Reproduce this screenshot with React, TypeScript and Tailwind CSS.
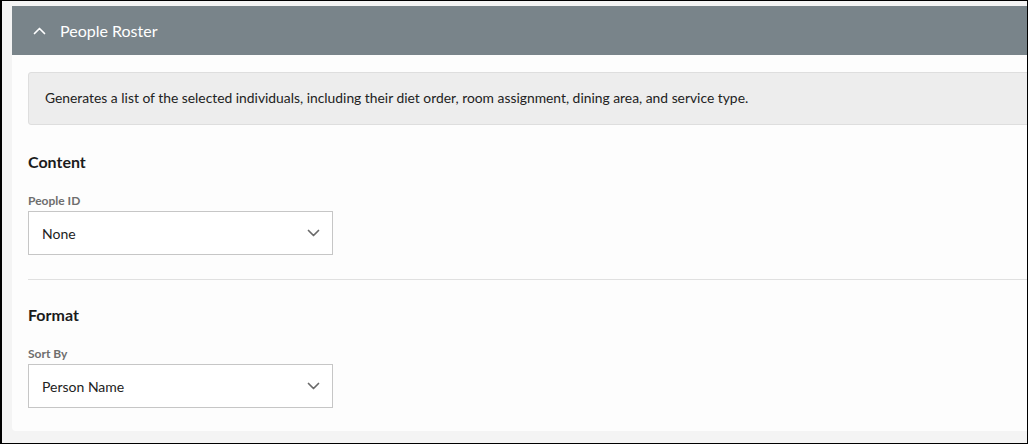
function Chevron({ up = false, className = "" }: { up?: boolean; className?: string }) {
  return (
    <svg width="13" height="8" viewBox="0 0 13 8" fill="none" className={className}>
      <path
        d={up ? "M1.5 6.5L6.5 1.5L11.5 6.5" : "M1.5 1.5L6.5 6.5L11.5 1.5"}
        stroke="currentColor"
        strokeWidth="1.7"
        strokeLinecap="round"
        strokeLinejoin="round"
      />
    </svg>
  );
}

function SelectBox({ label, value, top }: { label: string; value: string; top: string }) {
  return (
    <div className={top}>
      <div className="text-[12px] leading-[18px] font-bold text-[#6e6e6e]">{label}</div>
      <div className="mt-[1px] flex h-[44px] w-[305px] items-center justify-between border border-[#c6c6c6] bg-white pl-[13px] pr-[12px]">
        <span className="text-[14px] text-[#222]">{value}</span>
        <Chevron className="text-[#6a6a6a]" />
      </div>
    </div>
  );
}

export default function App() {
  return (
    <main
      className="flex h-[444px] w-[1028px] overflow-hidden border-t border-r border-b border-l-2 border-black bg-[#f4f4f4] pl-[10px] pt-[5px]"
      style={{ fontFamily: "Lato, 'Noto Sans', sans-serif" }}
    >
      <div className="flex h-[425px] w-[1060px] shrink-0 flex-col rounded-bl-[4px] bg-[#fdfdfd]">
        <div className="flex h-[49px] items-center gap-[14px] bg-[#79848a] pl-[21px] text-white">
          <Chevron up />
          <span className="text-[16px]">People Roster</span>
        </div>
        <div className="flex flex-col pl-[16px]">
          <div className="mt-[17px] flex h-[53px] items-center rounded-[3px] border border-[#dedede] bg-[#ededed] pl-[16px]">
            <p className="-mt-px text-[13.85px] text-[#222]">
              Generates a list of the selected individuals, including their diet order, room assignment, dining area, and service type.
            </p>
          </div>
          <h2 className="mt-[25px] text-[16px] leading-6 font-bold text-[#1b1b1b]">Content</h2>
          <SelectBox label="People ID" value="None" top="mt-[18px]" />
          <div className="mt-[24px] h-px bg-[#e0e0e0]" />
          <h2 className="mt-[23px] text-[16px] leading-6 font-bold text-[#1b1b1b]">Format</h2>
          <SelectBox label="Sort By" value="Person Name" top="mt-[18px]" />
        </div>
      </div>
    </main>
  );
}
